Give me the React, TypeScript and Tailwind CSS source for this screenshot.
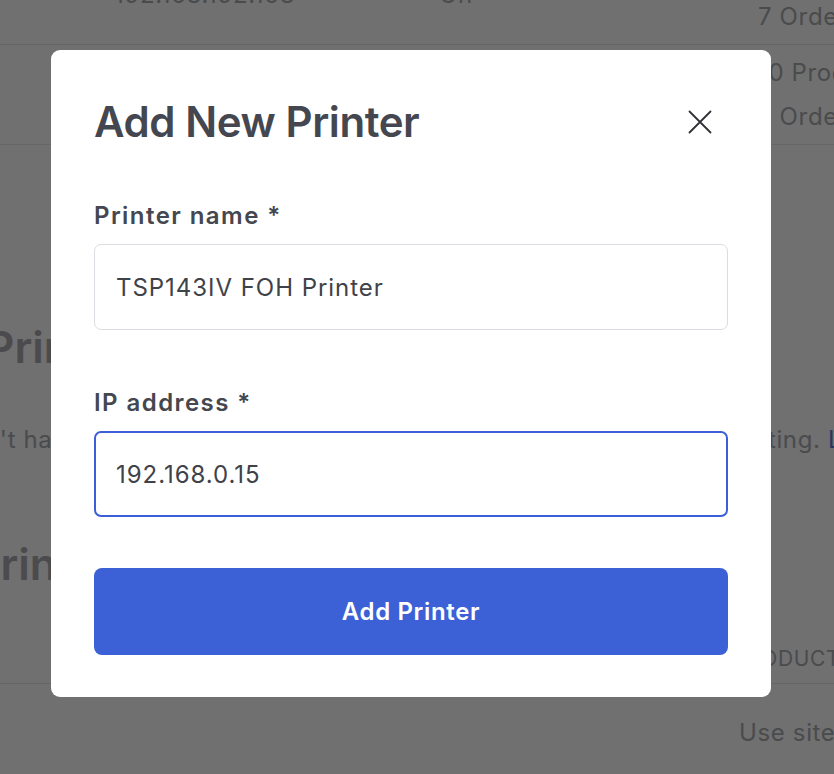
import React from "react";

const rows = [
  { ip: "192.168.192.168", status: "On", products: "10 Products", orders: "7 Orders" },
  { ip: "192.168.0.104", status: "Off", products: "10 Products", orders: "7 Orders" },
];

const CloseIcon = () => (
  <svg width="24" height="24" viewBox="0 0 24 24" fill="none" stroke="#2f3136" strokeWidth="1.8" strokeLinecap="round">
    <path d="M1.5 1.5L22.5 22.5M22.5 1.5L1.5 22.5" />
  </svg>
);

const Field = ({ label, value, focused }: { label: string; value: string; focused?: boolean }) => (
  <label className="flex flex-col gap-3">
    <span className="text-[24px] leading-[32px] font-semibold tracking-[0.06em] text-[#44474f]">{label}</span>
    <input
      defaultValue={value}
      className={
        focused
          ? "h-[86px] w-full rounded-[7px] border-2 border-[#3c5fd8] px-[20px] text-[24px] tracking-[0.04em] text-[#3f4249] outline-none"
          : "h-[86px] w-full rounded-[7px] border border-[#dcdde2] px-[21px] text-[24px] tracking-[0.04em] text-[#3f4249] outline-none"
      }
    />
  </label>
);

const App = () => {
  return (
    <div className="relative h-[774px] w-[834px] overflow-hidden bg-white font-['Inter',sans-serif] tracking-[0.04em] text-[#a9abb0]">
      {/* page behind the dialog */}
      <div className="-mt-[55px]">
        {rows.map((row, index) => (
          <div key={index} className="flex h-[100px] items-center border-b border-[#e8e8e8] text-[24px] whitespace-nowrap">
            <span className="ml-[114px] w-[325px] shrink-0">{row.ip}</span>
            <span className="w-[319px] shrink-0">{row.status}</span>
            <div className="flex shrink-0 flex-col leading-[44px]">
              <span>{row.products}</span>
              <span>{row.orders}</span>
            </div>
          </div>
        ))}
      </div>
      <h2 className="mt-[176px] -ml-[14px] text-[44px] leading-[52px] font-semibold tracking-normal whitespace-nowrap text-[#aaacb0]">
        Printing
      </h2>
      <div className="mt-[51px] -ml-[48px] flex text-[24px] leading-[32px] whitespace-nowrap">
        <p className="flex w-[876px] shrink-0 justify-between">
          <span>Don't have a printer yet?</span>
          <span>Order one for kitchen ticket printing.&nbsp;</span>
        </p>
        <a className="shrink-0 text-[#5b7be0]">Learn more</a>
      </div>
      <h2 className="mt-[82px] -ml-[28px] text-[44px] leading-[52px] font-semibold tracking-normal whitespace-nowrap text-[#aaacb0]">
        Printers
      </h2>
      <div className="mt-[55px] flex border-b border-[#e8e8e8] pb-[10px] text-[21px] leading-[28px] uppercase whitespace-nowrap">
        <span className="ml-[114px] w-[325px] shrink-0">Name</span>
        <span className="w-[294px] shrink-0">IP address</span>
        <span className="shrink-0">Products</span>
      </div>
      <div className="flex pt-[33px] text-[24px] leading-[32px] whitespace-nowrap">
        <span className="ml-[739px] shrink-0">Use site default</span>
      </div>

      {/* overlay + dialog */}
      <div className="absolute inset-0 bg-black/[0.56]" />
      <div className="absolute left-[51px] top-[50px] w-[720px] rounded-[9px] bg-white px-[43px] pt-[48px] pb-[42px]">
        <div className="flex items-center justify-between">
          <h1 className="text-[42px] leading-[48px] font-semibold tracking-[-0.01em] text-[#44474f]">Add New Printer</h1>
          <button className="mr-[16px] flex items-center justify-center">
            <CloseIcon />
          </button>
        </div>
        <div className="mt-[54px] flex flex-col gap-[57px]">
          <Field label="Printer name *" value="TSP143IV FOH Printer" />
          <Field label="IP address *" value="192.168.0.15" focused />
        </div>
        <button className="mt-[51px] h-[87px] w-full rounded-[8px] bg-[#3c61d6] text-[24px] font-semibold text-white">
          Add Printer
        </button>
      </div>
    </div>
  );
};

export default App;
